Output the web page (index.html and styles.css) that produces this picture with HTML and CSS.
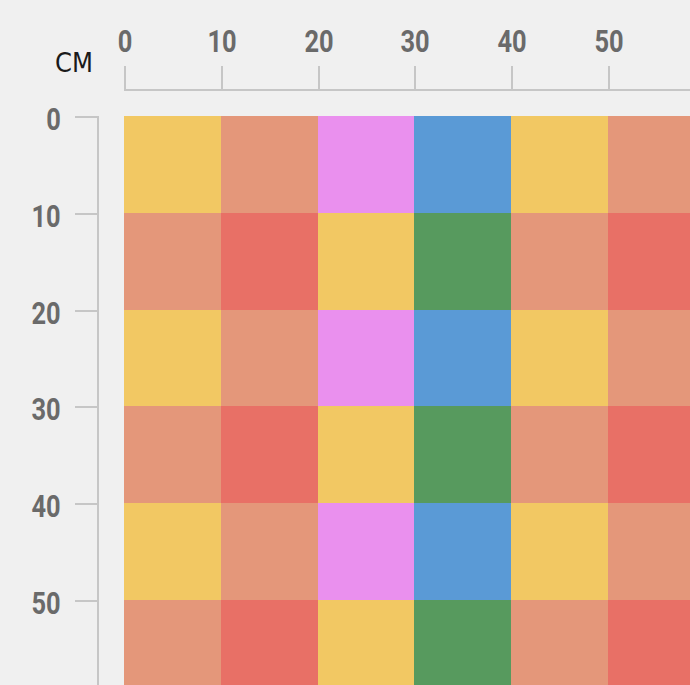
FILE: index.html
```html
<!DOCTYPE html>
<html lang="en">
<head>
<meta charset="utf-8">
<title>Grid ruler</title>
<link rel="stylesheet" href="styles.css">
</head>
<body>
<div class="page">
  <div class="corner"><span class="unit">CM</span></div>
  <div class="hruler">
    <div class="htick"><span class="hlabel">0</span><span class="hmark"></span></div>
    <div class="htick"><span class="hlabel">10</span><span class="hmark"></span></div>
    <div class="htick"><span class="hlabel">20</span><span class="hmark"></span></div>
    <div class="htick"><span class="hlabel">30</span><span class="hmark"></span></div>
    <div class="htick"><span class="hlabel">40</span><span class="hmark"></span></div>
    <div class="htick"><span class="hlabel">50</span><span class="hmark"></span></div>
  </div>
  <div class="vruler">
    <div class="vtick"><span class="vlabel">0</span><span class="vmark"></span></div>
    <div class="vtick"><span class="vlabel">10</span><span class="vmark"></span></div>
    <div class="vtick"><span class="vlabel">20</span><span class="vmark"></span></div>
    <div class="vtick"><span class="vlabel">30</span><span class="vmark"></span></div>
    <div class="vtick"><span class="vlabel">40</span><span class="vmark"></span></div>
    <div class="vtick"><span class="vlabel">50</span><span class="vmark"></span></div>
  </div>
  <div class="board">
    <div class="cell yellow"></div><div class="cell salmon"></div><div class="cell pink"></div><div class="cell blue"></div><div class="cell yellow"></div><div class="cell salmon"></div>
    <div class="cell salmon"></div><div class="cell red"></div><div class="cell yellow"></div><div class="cell green"></div><div class="cell salmon"></div><div class="cell red"></div>
    <div class="cell yellow"></div><div class="cell salmon"></div><div class="cell pink"></div><div class="cell blue"></div><div class="cell yellow"></div><div class="cell salmon"></div>
    <div class="cell salmon"></div><div class="cell red"></div><div class="cell yellow"></div><div class="cell green"></div><div class="cell salmon"></div><div class="cell red"></div>
    <div class="cell yellow"></div><div class="cell salmon"></div><div class="cell pink"></div><div class="cell blue"></div><div class="cell yellow"></div><div class="cell salmon"></div>
    <div class="cell salmon"></div><div class="cell red"></div><div class="cell yellow"></div><div class="cell green"></div><div class="cell salmon"></div><div class="cell red"></div>
  </div>
</div>
</body>
</html>
```

FILE: styles.css
```css
html, body {
  margin: 0;
  padding: 0;
  background: #f0f0f0;
  overflow: hidden;
}

.page {
  width: 690px;
  height: 685px;
  overflow: hidden;
  display: grid;
  grid-template-columns: 124px minmax(0, 1fr);
  grid-template-rows: 116px minmax(0, 1fr);
  font-family: Roboto, "DejaVu Sans", sans-serif;
}

.corner {
  padding: 49px 0 0 55px;
}

.unit {
  display: block;
  font-family: "DejaVu Sans Condensed", "DejaVu Sans", sans-serif;
  font-size: 27px;
  line-height: 1;
  color: #1a1a1a;
}

.hruler {
  display: flex;
  align-items: flex-start;
  height: 89px;
  border-bottom: 2px solid #c6c6c6;
}

.htick {
  flex: 0 0 96.8px;
  display: flex;
  flex-direction: column;
  align-items: flex-start;
  padding-top: 26px;
}

.hlabel {
  display: block;
  font-size: 31px;
  font-weight: 700;
  line-height: 31px;
  height: 40px;
  color: #6a6a6a;
  transform: translateX(calc(-50% + 1px)) scaleX(0.82);
}

.hmark {
  display: block;
  width: 2px;
  height: 23px;
  background: #c6c6c6;
}

.vruler {
  display: flex;
  flex-direction: column;
  align-items: flex-end;
  padding-right: 25px;
}

.vtick {
  flex: 0 0 96.8px;
  display: flex;
  align-items: flex-start;
  border-right: 2px solid #c6c6c6;
}

.vlabel {
  display: block;
  font-size: 31px;
  font-weight: 700;
  line-height: 31px;
  margin-top: -12px;
  margin-right: 14px;
  color: #6a6a6a;
  transform: scaleX(0.82);
  transform-origin: right center;
}

.vmark {
  display: block;
  width: 22px;
  height: 2px;
  background: #c6c6c6;
}

.board {
  display: grid;
  grid-template-columns: repeat(6, 96.8px);
  grid-template-rows: repeat(6, 96.8px);
  width: 580.8px;
}

.cell { display: block; }
.yellow { background: #f2c863; }
.salmon { background: #e4977a; }
.red { background: #e87066; }
.pink { background: #ea90ee; }
.blue { background: #5a9ad6; }
.green { background: #579a5e; }
```
